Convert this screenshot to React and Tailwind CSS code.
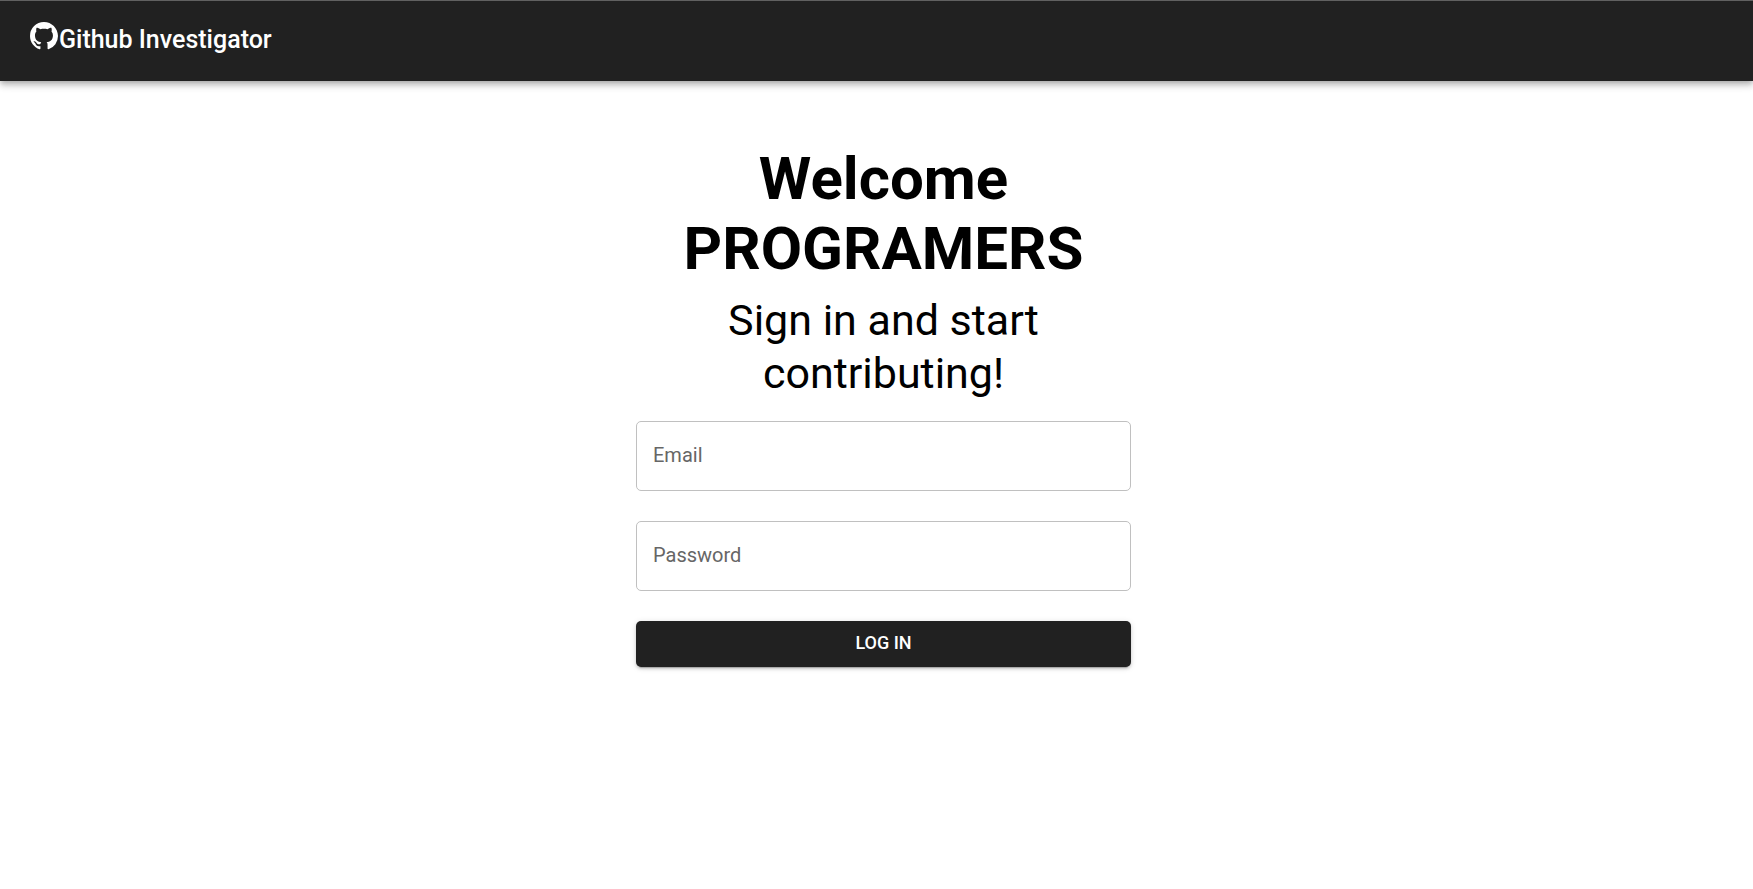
import React from "react";
import { VscGithubInverted } from "react-icons/vsc";

function Field({ id, label, type, autoComplete }) {
  return (
    <div className="relative w-full">
      <input
        id={id}
        name={id}
        type={type}
        autoComplete={autoComplete}
        placeholder=" "
        className="peer block h-[70px] w-full rounded-[5px] border border-[#c0c0c0] bg-white px-4 text-xl text-black focus:border-[#212121] focus:outline-none"
      />
      <label
        htmlFor={id}
        className="pointer-events-none absolute top-5 left-[17px] text-xl text-[#666666] peer-focus:-top-3 peer-focus:bg-white peer-focus:text-base peer-[:not(:placeholder-shown)]:-top-3 peer-[:not(:placeholder-shown)]:bg-white peer-[:not(:placeholder-shown)]:text-base"
      >
        {label}
      </label>
    </div>
  );
}

export default function App() {
  return (
    <div className="min-h-screen bg-white font-['Roboto',sans-serif] text-black">
      <header className="flex h-[81px] items-center border-t border-[#616161] bg-[#212121] px-[30px] pb-[2px] text-white shadow-[0_2px_5px_-1px_rgba(0,0,0,0.2),0_5px_6px_rgba(0,0,0,0.14),0_1px_12px_rgba(0,0,0,0.12)]">
        <a href="#" className="flex items-start gap-px">
          <VscGithubInverted className="size-7" aria-hidden="true" />
          <span className="text-[25px] leading-9 font-medium">Github Investigator</span>
        </a>
      </header>

      <main className="flex justify-center pt-[63px] pl-[14px]">
        <div className="w-full max-w-[495px] text-center">
          <h1 className="text-6xl leading-[70px] font-bold">Welcome PROGRAMERS</h1>
          <p className="mt-[10px] text-[43px] leading-[53px]">Sign in and start contributing!</p>
          <form className="mt-[21px] flex flex-col gap-[30px]" onSubmit={(e) => e.preventDefault()}>
            <Field id="email" label="Email" type="email" autoComplete="email" />
            <Field id="password" label="Password" type="password" autoComplete="current-password" />
            <button
              type="submit"
              className="h-[46px] w-full rounded-[5px] bg-[#212121] pb-1 text-[18px] font-medium text-white uppercase shadow-[0_4px_1px_-3px_rgba(0,0,0,0.2),0_2px_3px_rgba(0,0,0,0.14),0_1px_6px_rgba(0,0,0,0.12)]"
            >
              Log in
            </button>
          </form>
        </div>
      </main>
    </div>
  );
}
